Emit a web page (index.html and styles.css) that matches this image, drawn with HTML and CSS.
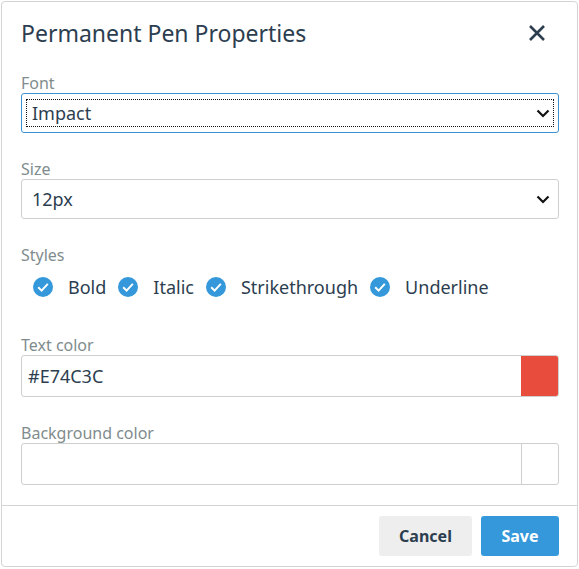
FILE: index.html
```html
<!DOCTYPE html>
<html>
<head>
<meta charset="utf-8">
<link rel="stylesheet" href="styles.css">
</head>
<body>
<div class="dialog">
  <div class="header">
    <div class="title">Permanent Pen Properties</div>
    <button class="close" aria-label="Close">
      <svg width="18" height="18" viewBox="0 0 18 18"><path d="M2 2L16 16M16 2L2 16" stroke="#2c3e50" stroke-width="2.6" stroke-linecap="butt" fill="none"/></svg>
    </button>
  </div>
  <div class="content">
    <div class="field">
      <div class="label">Font</div>
      <div class="select focused">
        <div class="select-inner">
          <span class="value">Impact</span>
          <svg class="chev" width="14" height="9" viewBox="0 0 14 9"><path d="M1.5 1.5L7 7L12.5 1.5" stroke="#111" stroke-width="2.2" fill="none"/></svg>
        </div>
      </div>
    </div>
    <div class="field">
      <div class="label">Size</div>
      <div class="select">
        <div class="select-inner">
          <span class="value">12px</span>
          <svg class="chev" width="14" height="9" viewBox="0 0 14 9"><path d="M1.5 1.5L7 7L12.5 1.5" stroke="#111" stroke-width="2.2" fill="none"/></svg>
        </div>
      </div>
    </div>
    <div class="field styles-field">
      <div class="label">Styles</div>
      <div class="checks">
        <div class="check"><svg width="20" height="20" viewBox="0 0 20 20"><circle cx="10" cy="10" r="10" fill="#3498db"/><path d="M5.2 10.3L8.6 13.6L14.8 6.8" stroke="#fff" stroke-width="2" fill="none"/></svg><span>Bold</span></div>
        <div class="check"><svg width="20" height="20" viewBox="0 0 20 20"><circle cx="10" cy="10" r="10" fill="#3498db"/><path d="M5.2 10.3L8.6 13.6L14.8 6.8" stroke="#fff" stroke-width="2" fill="none"/></svg><span>Italic</span></div>
        <div class="check"><svg width="20" height="20" viewBox="0 0 20 20"><circle cx="10" cy="10" r="10" fill="#3498db"/><path d="M5.2 10.3L8.6 13.6L14.8 6.8" stroke="#fff" stroke-width="2" fill="none"/></svg><span>Strikethrough</span></div>
        <div class="check"><svg width="20" height="20" viewBox="0 0 20 20"><circle cx="10" cy="10" r="10" fill="#3498db"/><path d="M5.2 10.3L8.6 13.6L14.8 6.8" stroke="#fff" stroke-width="2" fill="none"/></svg><span>Underline</span></div>
      </div>
    </div>
    <div class="field">
      <div class="label">Text color</div>
      <div class="color-input">
        <span class="color-text">#E74C3C</span>
        <span class="swatch red"></span>
      </div>
    </div>
    <div class="field">
      <div class="label">Background color</div>
      <div class="color-input">
        <span class="color-text"></span>
        <span class="swatch"></span>
      </div>
    </div>
  </div>
  <div class="footer">
    <button class="btn cancel">Cancel</button>
    <button class="btn save">Save</button>
  </div>
</div>
</body>
</html>
```
FILE: styles.css
```css
* { box-sizing: border-box; }
html, body { margin: 0; padding: 0; background: #fff; }
body {
  font-family: "Noto Sans", "Open Sans", sans-serif;
  color: #2c3e50;
}
.dialog {
  margin: 1px 0 0 1px;
  width: 577px;
  height: 566px;
  border: 1px solid #d4d4d4;
  border-radius: 4px;
  display: flex;
  flex-direction: column;
  background: #fff;
  overflow: hidden;
}
.header {
  display: flex;
  align-items: center;
  justify-content: space-between;
  padding: 16px 31px 25px 19px;
  flex: none;
}
.title {
  font-size: 23px;
  line-height: 30px;
  color: #2c3e50;
}
.close {
  border: 0;
  background: none;
  padding: 0;
  width: 18px;
  height: 18px;
  display: block;
}
.close svg { display: block; }
.content {
  flex: 1;
  min-height: 0;
  padding: 0 18px 0 19px;
}
.field { margin-bottom: 26px; }
.field:last-child { margin-bottom: 0; }
.styles-field { margin-bottom: 36px; }
.label {
  font-size: 16px;
  line-height: 20px;
  color: #7f8c8d;
}
.select {
  height: 40px;
  border: 1px solid #cfcfcf;
  border-radius: 3px;
  padding: 5px 4px 5px 4px;
}
.select.focused { border-color: #3a92d4; }
.select-inner {
  height: 100%;
  border: 1px dotted transparent;
  display: flex;
  align-items: center;
  justify-content: space-between;
  padding: 0 3px 0 5px;
}
.select.focused .select-inner { border-color: #111; }
.value {
  font-size: 18px;
  line-height: 24px;
}
.chev { display: block; }
.checks {
  display: flex;
  align-items: center;
  padding: 10px 0 0 12px;
  height: 34px;
}
.check {
  display: flex;
  align-items: center;
  margin-right: 12px;
}
.check svg { display: block; margin-right: 15px; }
.check span {
  font-size: 18px;
  line-height: 24px;
}
.color-input {
  height: 42px;
  border: 1px solid #cfcfcf;
  border-radius: 3px;
  display: flex;
  overflow: hidden;
}
.color-text {
  flex: 1;
  font-size: 18px;
  line-height: 40px;
  padding-left: 6px;
}
.swatch {
  width: 37px;
  border-left: 1px solid #cfcfcf;
}
.swatch.red { background: #e74c3c; border-left-color: #e74c3c; }
.footer {
  flex: none;
  border-top: 1px solid #d4d4d4;
  padding: 10px 18px 10px 19px;
  display: flex;
  justify-content: flex-end;
  gap: 9px;
}
.btn {
  height: 40px;
  border: 0;
  border-radius: 3px;
  font-family: "Noto Sans", "Open Sans", sans-serif;
  font-size: 16px;
  font-weight: bold;
  padding: 0;
}
.cancel { width: 93px; background: #eeeeee; color: #2c3e50; }
.save { width: 78px; background: #3498db; color: #fff; }
```
